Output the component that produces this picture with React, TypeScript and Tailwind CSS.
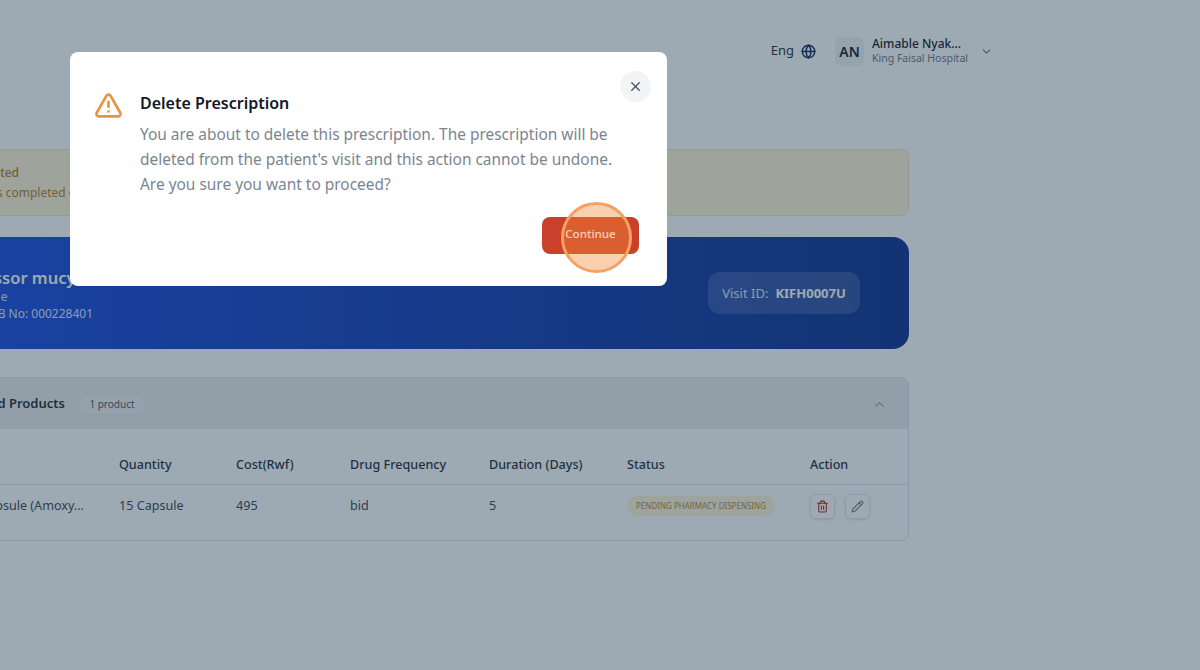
import React from 'react';
import { ChevronDown, ChevronUp, Globe, Pencil, Trash2, TriangleAlert, X } from 'lucide-react';

const columns = 'grid grid-cols-[218px_117px_114px_139px_138px_183px_1fr]';

const App: React.FC = () => {
  return (
    <div className="relative h-[670px] w-[1200px] overflow-hidden bg-white font-['Noto_Sans',sans-serif] text-[#111827]">
      {/* Top bar */}
      <header className="flex h-[102px] items-center justify-end pr-[207px]">
        <div className="flex items-center">
          <span className="text-[13px] text-[#1f2937]">Eng</span>
          <Globe className="ml-[7px] h-[15px] w-[15px] text-[#0f2a56]" strokeWidth={2.4} />
          <div className="ml-[19px] flex h-[29px] w-[29px] items-center justify-center rounded-md bg-[#f0f2f4] text-[14px] font-semibold text-[#111827]">
            AN
          </div>
          <div className="ml-[8px] flex w-[100px] flex-col whitespace-nowrap">
            <span className="text-[12px] font-medium leading-[15px] text-[#111827]">Aimable Nyak...</span>
            <span className="text-[10.5px] leading-[15px] text-[#6b7280]">King Faisal Hospital</span>
          </div>
          <ChevronDown className="ml-[8px] h-[13px] w-[13px] text-[#6b7280]" />
        </div>
      </header>

      {/* Page content, runs off the left edge */}
      <main className="ml-[-100px] mt-[47px] flex w-[1009px] flex-col">
        <div className="flex h-[67px] flex-col justify-center rounded-lg border border-[#f7e3bd] bg-[#fff3d6] pl-[4px] text-[12px] leading-[20px] text-[#b7791f]">
          <span className="pl-[3px] font-medium">Visit not completed</span>
          <span>Visit is marked as completed checkout pending</span>
        </div>

        <section className="mt-[21px] flex h-[112px] items-center justify-between rounded-2xl bg-gradient-to-r from-[#174ce9] to-[#0b2f8f] pl-[77px] pr-[49px] text-white">
          <div className="mt-[3px] flex flex-col whitespace-nowrap">
            <span className="ml-[-26px] text-[16.5px] font-semibold leading-[21px]">Professor mucyo</span>
            <span className="pl-[3px] text-[12px] leading-[17px] text-[#dbe4ff]">Male</span>
            <span className="text-[12px] leading-[17px] text-[#dbe4ff]">RSSB No: 000228401</span>
          </div>
          <div className="flex h-[42px] w-[152px] items-center justify-center gap-[7px] rounded-xl bg-white/15 pt-[2px]">
            <span className="text-[13px] text-[#dbe4ff]">Visit ID:</span>
            <span className="text-[13px] font-bold">KIFH0007U</span>
          </div>
        </section>

        <section className="mt-[28px] overflow-hidden rounded-lg border border-[#dde1e5]">
          <div className="flex h-[51px] items-center justify-between bg-[#ebecec] pr-[21px] pt-[1px]">
            <div className="flex items-center">
              <span className="w-[164px] text-right text-[13px] font-semibold text-[#1f2937]">Prescribed Products</span>
              <span className="ml-[14px] flex h-[21px] w-[66px] items-center justify-center rounded-full border border-[#e2e5e9] bg-[#f0f1f3] text-[10px] text-[#4b5563]">
                1 product
              </span>
            </div>
            <ChevronUp className="h-[15px] w-[15px] text-[#9ca3af]" />
          </div>
          <div className={`${columns} h-[56px] items-center border-b border-[#e5e7eb] pt-[17px] text-[12.6px] font-medium text-[#1f2937]`}>
            <span className="pl-[20px]">Name</span>
            <span>Quantity</span>
            <span>Cost(Rwf)</span>
            <span>Drug Frequency</span>
            <span>Duration (Days)</span>
            <span>Status</span>
            <span>Action</span>
          </div>
          <div className={`${columns} h-[55px] items-center pb-[13px] text-[12.6px] text-[#374151]`}>
            <span className="pr-[35px] text-right">Capsule (Amoxy...</span>
            <span>15 Capsule</span>
            <span>495</span>
            <span>bid</span>
            <span>5</span>
            <span className="flex h-[20px] w-[148px] items-center justify-center rounded-full bg-[#fdf3d8] text-[8px] uppercase text-[#b7832f]">
              Pending pharmacy dispensing
            </span>
            <div className="flex items-center gap-[10px]">
              <button className="flex h-[25px] w-[25px] items-center justify-center rounded-md border border-[#e5e7eb] shadow-sm">
                <Trash2 className="h-[13px] w-[13px] text-[#b91c1c]" />
              </button>
              <button className="flex h-[25px] w-[25px] items-center justify-center rounded-md border border-[#e5e7eb] shadow-sm">
                <Pencil className="h-[13px] w-[13px] text-[#6b7280]" />
              </button>
            </div>
          </div>
        </section>
      </main>

      {/* Overlay */}
      <div className="absolute inset-0 bg-[#1e3a4f]/[.43]" />

      {/* Delete dialog */}
      <div className="absolute left-[70px] top-[52px] h-[234px] w-[597px] rounded-lg bg-white pl-[24px] pr-[28px] pt-[39px]">
        <button className="absolute right-[16px] top-[19px] flex h-[31px] w-[31px] items-center justify-center rounded-full bg-[#f3f4f6]">
          <X className="h-[15px] w-[15px] text-[#4b5563]" strokeWidth={2.2} />
        </button>
        <div className="flex items-start">
          <TriangleAlert className="h-[29px] w-[29px] text-[#e8933f]" strokeWidth={2.2} />
          <div className="ml-[17px] flex flex-col">
            <h2 className="text-[16px] font-semibold leading-[24px] text-[#111827]">Delete Prescription</h2>
            <p className="mt-[7px] w-[490px] text-[15.45px] leading-[25px] text-[#7b8591]">
              You are about to delete this prescription. The prescription will be deleted from the patient's visit and this action cannot be undone. Are you sure you want to proceed?
            </p>
          </div>
        </div>
        <div className="mt-[20px] flex justify-end">
          <button className="h-[37px] w-[97px] rounded-lg bg-[#c9412a] pb-[3px] text-[11.6px] font-medium text-white">Continue</button>
        </div>
      </div>

      {/* Click highlight */}
      <div className="absolute left-[561px] top-[202px] h-[71px] w-[71px] rounded-full border-[3px] border-[#f4a262] bg-[#f58a3c]/40" />
    </div>
  );
};

export default App;
